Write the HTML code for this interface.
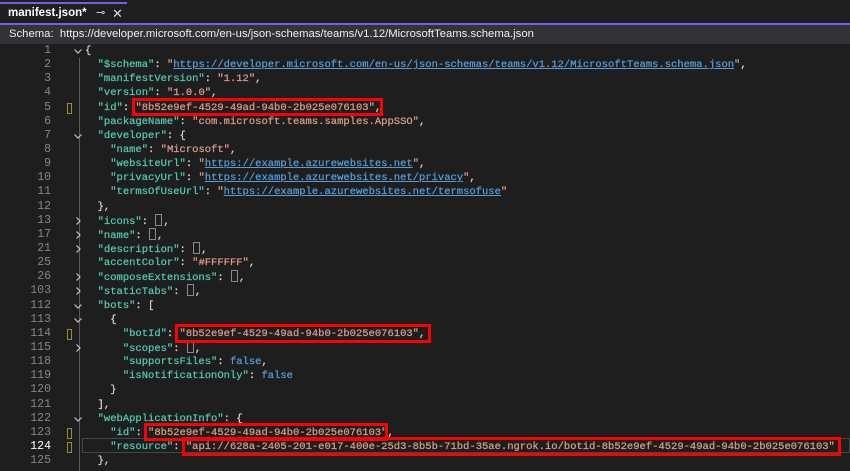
<!DOCTYPE html>
<html><head><meta charset="utf-8"><style>
body{margin:0;width:850px;height:471px;background:#1e1e1e;overflow:hidden;position:relative;font-family:"Liberation Sans",sans-serif}
.tabbar{position:absolute;left:0;top:0;width:850px;height:23px;background:#1f1f1f}
.tab{position:absolute;left:0;top:2px;width:127px;height:21px;border-top:2px solid #7160e8;box-sizing:border-box;background:#1f1f1f;color:#fff;font-weight:bold;font-size:11.5px;line-height:19px;padding-left:8px}
.tab .pin{position:absolute;left:96px;top:0;font-weight:normal;font-size:11px;color:#ddd}
.tab .x{position:absolute;left:112px;top:0;font-weight:normal;font-size:13px;color:#ddd}
.acc{position:absolute;left:0;top:23px;width:850px;height:2px;background:#7160e8}
.schema{position:absolute;left:0;top:25px;width:850px;height:19px;background:#333337;color:#f0f0f0;font-size:11.3px;line-height:19px;padding-left:9px;box-sizing:border-box}
.ln{position:absolute;left:0;width:51px;text-align:right;color:#858585;font:11.5px/14.14px "Liberation Mono",monospace}
.code{position:absolute;left:85px;white-space:pre;color:#d4d4d4;font:10.5px/14.14px "Liberation Mono",monospace;-webkit-text-stroke:0.25px currentColor}
.fold{position:absolute;left:73px;width:10px;height:14px}
.k{color:#4ec9b0}.s{color:#d69d85}.b{color:#569cd6}.u{color:#569cd6;text-decoration:underline}
.c{display:inline-block;width:7px;height:12px;border:1px solid #8a8a8a;vertical-align:-2px;margin:0 1px;box-sizing:border-box}
.mk{position:absolute;left:67px;width:5px;height:11px;border:1px solid #a08b2a;box-sizing:border-box}
.red{position:absolute;border:3px solid #f00;box-sizing:border-box}
.guide{position:absolute;left:79px;width:1px;background:#5a5a5a}
</style></head><body>
<div class="tabbar"><div class="tab">manifest.json*<span class="pin">⊸</span><span class="x">✕</span></div></div>
<div class="acc"></div>
<div class="schema">Schema:&nbsp; https://developer.microsoft.com/en-us/json-schemas/teams/v1.12/MicrosoftTeams.schema.json</div>
<div class="guide" style="top:58px;height:413px"></div>
<div style="position:absolute;left:82px;top:438px;width:768px;height:15px;border:1px solid #464646;box-sizing:border-box"></div>
<div id="lines"></div>
<script>
var L=[
[1,'{','v'],
[2,'  <span class="k">"$schema"</span>: <span class="s">"</span><span class="u">https://developer.microsoft.com/en-us/json-schemas/teams/v1.12/MicrosoftTeams.schema.json</span><span class="s">"</span>,'],
[3,'  <span class="k">"manifestVersion"</span>: <span class="s">"1.12"</span>,'],
[4,'  <span class="k">"version"</span>: <span class="s">"1.0.0"</span>,'],
[5,'  <span class="k">"id"</span>: <span class="s">"8b52e9ef-4529-49ad-94b0-2b025e076103"</span>,','',1],
[6,'  <span class="k">"packageName"</span>: <span class="s">"com.microsoft.teams.samples.AppSSO"</span>,'],
[7,'  <span class="k">"developer"</span>: {','v'],
[8,'    <span class="k">"name"</span>: <span class="s">"Microsoft"</span>,'],
[9,'    <span class="k">"websiteUrl"</span>: <span class="s">"</span><span class="u">https://example.azurewebsites.net</span><span class="s">"</span>,'],
[10,'    <span class="k">"privacyUrl"</span>: <span class="s">"</span><span class="u">https://example.azurewebsites.net/privacy</span><span class="s">"</span>,'],
[11,'    <span class="k">"termsOfUseUrl"</span>: <span class="s">"</span><span class="u">https://example.azurewebsites.net/termsofuse</span><span class="s">"</span>'],
[12,'  },'],
[13,'  <span class="k">"icons"</span>: <span class="c"></span>,','>'],
[17,'  <span class="k">"name"</span>: <span class="c"></span>,','>'],
[21,'  <span class="k">"description"</span>: <span class="c"></span>,','>'],
[25,'  <span class="k">"accentColor"</span>: <span class="s">"#FFFFFF"</span>,'],
[26,'  <span class="k">"composeExtensions"</span>: <span class="c"></span>,','>'],
[103,'  <span class="k">"staticTabs"</span>: <span class="c"></span>,','>'],
[112,'  <span class="k">"bots"</span>: [','v'],
[113,'    {','v'],
[114,'      <span class="k">"botId"</span>: <span class="s">"8b52e9ef-4529-49ad-94b0-2b025e076103"</span>,','',1],
[115,'      <span class="k">"scopes"</span>: <span class="c"></span>,','>'],
[118,'      <span class="k">"supportsFiles"</span>: <span class="b">false</span>,'],
[119,'      <span class="k">"isNotificationOnly"</span>: <span class="b">false</span>'],
[120,'    }'],
[121,'  ],'],
[122,'  <span class="k">"webApplicationInfo"</span>: {','v'],
[123,'    <span class="k">"id"</span>: <span class="s">"8b52e9ef-4529-49ad-94b0-2b025e076103"</span>,','',1],
[124,'    <span class="k">"resource"</span>: <span class="s">"api://628a-2405-201-e017-400e-25d3-8b5b-71bd-35ae.ngrok.io/botid-8b52e9ef-4529-49ad-94b0-2b025e076103"</span>','',1],
[125,'  },']];
var h='';
L.forEach(function(r,i){var y=44+i*14.14;
h+='<div class="ln" style="top:'+y+'px;'+(r[0]==124?'color:#fff':'')+'">'+r[0]+'</div>';
h+='<div class="code" style="top:'+y+'px">'+r[1]+'</div>';
if(r[2])h+='<svg class="fold" style="top:'+y+'px" viewBox="0 0 10 14"><path d="'+(r[2]=='v'?'M1.5 5.5 L5 9 L8.5 5.5':'M3.5 3.5 L7 7 L3.5 10.5')+'" fill="none" stroke="#c5c5c5" stroke-width="1.2"/></svg>';
if(r[3])h+='<div class="mk" style="top:'+(y+2)+'px"></div>';});
document.getElementById('lines').innerHTML=h;
</script>
<div class="red" style="left:132px;top:98px;width:251px;height:18px"></div>
<div class="red" style="left:175px;top:324px;width:256px;height:19px"></div>
<div class="red" style="left:144px;top:423px;width:244px;height:18px"></div>
<div class="red" style="left:182px;top:437px;width:659px;height:19px"></div>
</body></html>
